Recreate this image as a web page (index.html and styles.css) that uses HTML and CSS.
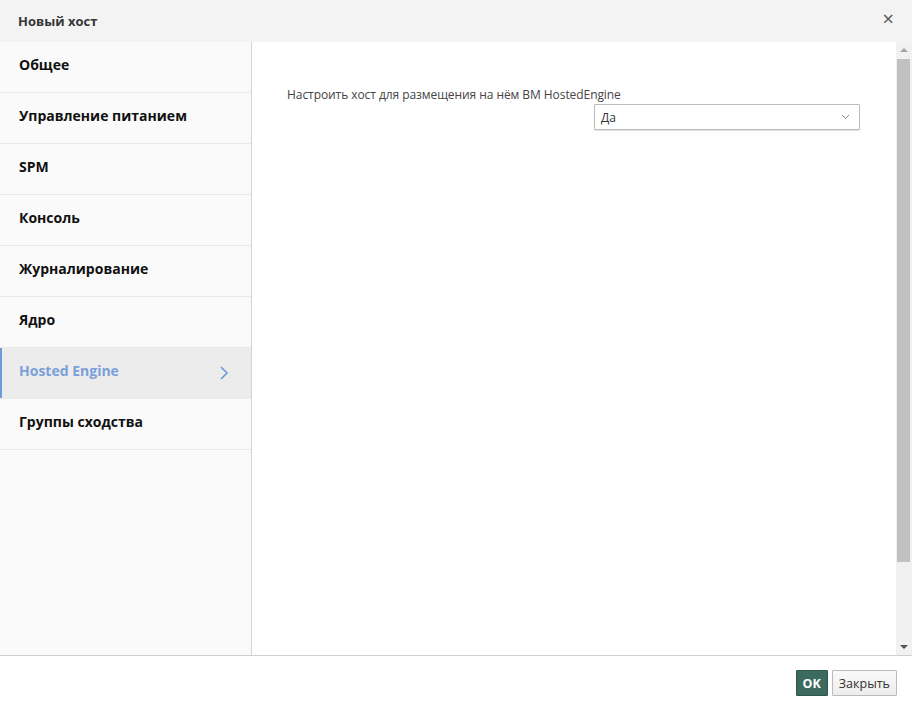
FILE: index.html
```html
<!DOCTYPE html>
<html lang="ru">
<head>
    <meta charset="UTF-8">
    <title>Новый хост</title>
    <link rel="stylesheet" href="styles.css">
</head>
<body>
    <div class="dialog">
        <div class="dialog-header">
            <span class="dialog-title">Новый хост</span>
            <span class="close">&times;</span>
        </div>

        <div class="dialog-body">
            <ul class="tabs">
                <li class="tab">Общее</li>
                <li class="tab">Управление питанием</li>
                <li class="tab">SPM</li>
                <li class="tab">Консоль</li>
                <li class="tab">Журналирование</li>
                <li class="tab">Ядро</li>
                <li class="tab active">
                    Hosted Engine
                    <svg class="tab-arrow" width="10" height="16" viewBox="0 0 10 16">
                        <path d="M2 2 L8 8 L2 14" fill="none" stroke="#6f9ad6" stroke-width="1.6"/>
                    </svg>
                </li>
                <li class="tab">Группы сходства</li>
            </ul>

            <div class="pane">
                <div class="pane-content">
                    <div class="field">
                        <label class="field-label">Настроить хост для размещения на нём ВМ HostedEngine</label>
                        <div class="select">
                            <span>Да</span>
                            <svg width="9" height="6" viewBox="0 0 9 6">
                                <path d="M1 1 L4.5 4.5 L8 1" fill="none" stroke="#888" stroke-width="1"/>
                            </svg>
                        </div>
                    </div>
                </div>

                <!-- fake scrollbar -->
                <div class="scrollbar">
                    <div class="scroll-btn"><span class="tri up"></span></div>
                    <div class="scroll-track">
                        <div class="scroll-thumb"></div>
                    </div>
                    <div class="scroll-btn"><span class="tri down"></span></div>
                </div>
            </div>
        </div>

        <div class="dialog-footer">
            <button class="btn btn-primary">OK</button>
            <button class="btn btn-default">Закрыть</button>
        </div>
    </div>
</body>
</html>
```

FILE: styles.css
```css
body {
    margin: 0;
    font-family: "Open Sans", "Liberation Sans", sans-serif;
    color: #333;
    background: #fff;
}

.dialog {
    width: 912px;
    height: 712px;
    display: flex;
    flex-direction: column;
}

.dialog-header {
    height: 42px;
    flex-shrink: 0;
    background: #f3f3f3;
    display: flex;
    align-items: center;
    justify-content: space-between;
    padding: 0 18px 0 18px;
}

.dialog-title {
    font-size: 13px;
    font-weight: 700;
    color: #363636;
}

.close {
    font-size: 20px;
    color: #555;
    line-height: 1;
    margin-top: -4px;
}

.dialog-body {
    flex: 1;
    display: flex;
    min-height: 0;
    border-bottom: 1px solid #cfcfcf;
}

.tabs {
    list-style: none;
    margin: 0;
    padding: 0;
    width: 251px;
    flex-shrink: 0;
    background: #fafafa;
    border-right: 1px solid #d4d4d4;
}

.tab {
    height: 51px;
    border-bottom: 1px solid #e8e8e8;
    display: flex;
    align-items: center;
    justify-content: space-between;
    padding: 0 22px 5px 19px;
    box-sizing: border-box;
    font-size: 14px;
    font-weight: 700;
    color: #111;
}

.tab.active {
    background: #ececec;
    color: #7a9fd9;
    box-shadow: inset 2px 0 0 #6f9ad6;
    border-bottom-color: #ececec;
}

.tab-arrow {
    margin-top: 5px;
}

.pane {
    flex: 1;
    display: flex;
}

.pane-content {
    flex: 1;
    padding: 44px 36px 0 35px;
}

.field-label {
    display: block;
    font-size: 12px;
    letter-spacing: -0.07px;
    color: #444;
    line-height: 17px;
}

.select {
    width: 266px;
    height: 26px;
    margin: 1px 0 0 auto;
    border: 1px solid #bbb;
    border-radius: 1px;
    box-shadow: 0 1px 1px rgba(0, 0, 0, 0.12);
    display: flex;
    align-items: center;
    justify-content: space-between;
    padding: 0 9px 0 6px;
    box-sizing: border-box;
    font-size: 12px;
    color: #333;
}

.scrollbar {
    width: 16px;
    flex-shrink: 0;
    background: #f1f1f1;
    display: flex;
    flex-direction: column;
}

.scroll-btn {
    height: 16px;
    display: flex;
    align-items: center;
    justify-content: center;
}

.tri {
    width: 0;
    height: 0;
    border-left: 4px solid transparent;
    border-right: 4px solid transparent;
}

.tri.up {
    border-bottom: 4px solid #a3a3a3;
}

.tri.down {
    border-top: 4px solid #505050;
}

.scroll-track {
    flex: 1;
    padding: 1px 2px 0 1px;
}

.scroll-thumb {
    height: 503px;
    background: #c1c1c1;
}

.dialog-footer {
    height: 56px;
    flex-shrink: 0;
    display: flex;
    align-items: flex-start;
    justify-content: flex-end;
    gap: 4px;
    padding: 14px 15px 0 0;
    box-sizing: border-box;
}

.btn {
    height: 26px;
    font-family: "Open Sans", "Liberation Sans", sans-serif;
    font-size: 12.5px;
    border-radius: 1px;
    cursor: pointer;
    padding: 0 6px;
}

.btn-primary {
    background: #3c6a5f;
    border: 1px solid #2f564d;
    color: #fff;
    font-weight: 700;
    padding: 0 6px;
}

.btn-default {
    background: linear-gradient(#fafafa, #ededed);
    border: 1px solid #bbb;
    color: #333;
}
```
